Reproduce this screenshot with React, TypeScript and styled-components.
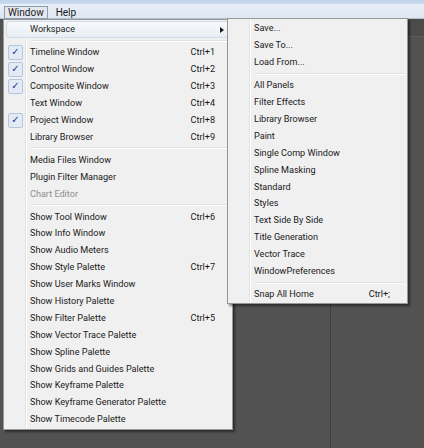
import React from "react";
import styled, { createGlobalStyle } from "styled-components";

const Global = createGlobalStyle`
  html, body { margin: 0; padding: 0; }
  body {
    width: 424px;
    height: 448px;
    overflow: hidden;
    background: #525252;
    font-family: Roboto, "Liberation Sans", Arial, sans-serif;
  }
`;

const Screen = styled.div`
  position: relative;
  width: 424px;
  height: 448px;
  display: flex;
  flex-direction: column;
  background: #525252;
`;

const TitleStrip = styled.div`
  height: 4px;
  background: linear-gradient(#bfd2ea, #cddced);
  border-bottom: 1px solid #e9f0f8;
`;

const MenuBar = styled.div`
  height: 13px;
  display: flex;
  align-items: center;
  gap: 4px;
  padding: 0 0 0 4px;
  background: linear-gradient(#e8eef6, #dfe7f1);
  border-bottom: 1px solid #b7c0cc;
`;

const BarItem = styled.div<{ $open?: boolean }>`
  height: 13px;
  display: flex;
  align-items: center;
  padding: 0 3px;
  font-size: 10px;
  color: #1a1a1a;
  border: 1px solid ${(p) => (p.$open ? "#8f9caf" : "transparent")};
  background: ${(p) => (p.$open ? "#e4e9ef" : "transparent")};
  box-sizing: border-box;
  line-height: 1;
  margin-top: 2px;
`;

const Workspace = styled.div`
  flex: 1;
  display: flex;
`;

const LeftPane = styled.div`
  width: 330px;
  border-right: 1px solid #3d3d3d;
  background: #525252;
`;

const RightPane = styled.div`
  flex: 1;
  display: flex;
  flex-direction: column;
`;

const PaneHeader = styled.div`
  height: 17px;
  background: #4b4b4b;
  border-bottom: 1px solid #5e5e5e;
`;

const MenuPanel = styled.div<{ $left: number; $top: number; $width: number }>`
  position: absolute;
  left: ${(p) => p.$left}px;
  top: ${(p) => p.$top}px;
  width: ${(p) => p.$width}px;
  box-sizing: border-box;
  padding: 1px 2px 1px 2px;
  background:
    linear-gradient(90deg, transparent 21px, #e2e3e3 21px, #e2e3e3 22px, #ffffff 22px, #ffffff 23px, transparent 23px),
    #f0f0f0;
  border: 1px solid #979797;
  box-shadow: 2px 2px 2px rgba(0, 0, 0, 0.45);
  display: flex;
  flex-direction: column;
`;

const Row = styled.div<{ $hot?: boolean; $disabled?: boolean }>`
  height: 16.9px;
  padding-top: 1px;
  display: grid;
  grid-template-columns: 22px 1fr auto 14px;
  align-items: center;
  font-size: 9.1px;
  line-height: 1;
  color: ${(p) => (p.$disabled ? "#8e8e8e" : "#1a1a1a")};
  border-radius: 3px;
  box-sizing: border-box;
  border: 1px solid ${(p) => (p.$hot ? "#d2dcea" : "transparent")};
  background: ${(p) =>
    p.$hot ? "linear-gradient(#f7f9fc, #e9eef5)" : "transparent"};
  white-space: nowrap;
`;

const CheckBox = styled.div`
  width: 15px;
  height: 15px;
  margin-left: 1px;
  margin-top: -1px;
  box-sizing: border-box;
  border: 1px solid #b6c6dc;
  border-radius: 2px;
  background: #e2eaf5;
  display: flex;
  align-items: center;
  justify-content: center;
  color: #22358f;
  font-size: 10px;
  font-family: "DejaVu Sans", sans-serif;
`;

const Label = styled.span`
  padding-left: 1px;
`;

const Shortcut = styled.span`
  padding-left: 18px;
`;

const Arrow = styled.span`
  justify-self: center;
  width: 0;
  height: 0;
  border-top: 3.5px solid transparent;
  border-bottom: 3.5px solid transparent;
  border-left: 4px solid #1a1a1a;
`;

const Separator = styled.div`
  height: 6.1px;
  display: flex;
  flex-direction: column;
  justify-content: center;
  padding-left: 25px;
  &::before {
    content: "";
    display: block;
    border-top: 1px solid #e0e0e0;
    border-bottom: 1px solid #ffffff;
  }
`;

type Item =
  | "-"
  | {
      label: string;
      key?: string;
      checked?: boolean;
      sub?: boolean;
      hot?: boolean;
      disabled?: boolean;
    };

const windowMenu: Item[] = [
  { label: "Workspace", sub: true, hot: true },
  "-",
  { label: "Timeline Window", key: "Ctrl+1", checked: true },
  { label: "Control Window", key: "Ctrl+2", checked: true },
  { label: "Composite Window", key: "Ctrl+3", checked: true },
  { label: "Text Window", key: "Ctrl+4" },
  { label: "Project Window", key: "Ctrl+8", checked: true },
  { label: "Library Browser", key: "Ctrl+9" },
  "-",
  { label: "Media Files Window" },
  { label: "Plugin Filter Manager" },
  { label: "Chart Editor", disabled: true },
  "-",
  { label: "Show Tool Window", key: "Ctrl+6" },
  { label: "Show Info Window" },
  { label: "Show Audio Meters" },
  { label: "Show Style Palette", key: "Ctrl+7" },
  { label: "Show User Marks Window" },
  { label: "Show History Palette" },
  { label: "Show Filter Palette", key: "Ctrl+5" },
  { label: "Show Vector Trace Palette" },
  { label: "Show Spline Palette" },
  { label: "Show Grids and Guides Palette" },
  { label: "Show Keyframe Palette" },
  { label: "Show Keyframe Generator Palette" },
  { label: "Show Timecode Palette" },
];

const workspaceMenu: Item[] = [
  { label: "Save..." },
  { label: "Save To..." },
  { label: "Load From..." },
  "-",
  { label: "All Panels" },
  { label: "Filter Effects" },
  { label: "Library Browser" },
  { label: "Paint" },
  { label: "Single Comp Window" },
  { label: "Spline Masking" },
  { label: "Standard" },
  { label: "Styles" },
  { label: "Text Side By Side" },
  { label: "Title Generation" },
  { label: "Vector Trace" },
  { label: "WindowPreferences" },
  "-",
  { label: "Snap All Home", key: "Ctrl+;" },
];

function Menu({
  items,
  left,
  top,
  width,
}: {
  items: Item[];
  left: number;
  top: number;
  width: number;
}) {
  return (
    <MenuPanel $left={left} $top={top} $width={width}>
      {items.map((it, i) =>
        it === "-" ? (
          <Separator key={i} />
        ) : (
          <Row key={i} $hot={it.hot} $disabled={it.disabled}>
            <span>{it.checked && <CheckBox>✓</CheckBox>}</span>
            <Label>{it.label}</Label>
            <Shortcut>{it.key ?? ""}</Shortcut>
            {it.sub ? <Arrow /> : <span />}
          </Row>
        )
      )}
    </MenuPanel>
  );
}

export default function App() {
  return (
    <>
      <Global />
      <Screen>
        <TitleStrip />
        <MenuBar>
          <BarItem $open>Window</BarItem>
          <BarItem>Help</BarItem>
        </MenuBar>
        <Workspace>
          <LeftPane />
          <RightPane>
            <PaneHeader />
          </RightPane>
        </Workspace>
        <Menu items={windowMenu} left={3} top={19} width={230} />
        <Menu items={workspaceMenu} left={227} top={18} width={181} />
      </Screen>
    </>
  );
}
